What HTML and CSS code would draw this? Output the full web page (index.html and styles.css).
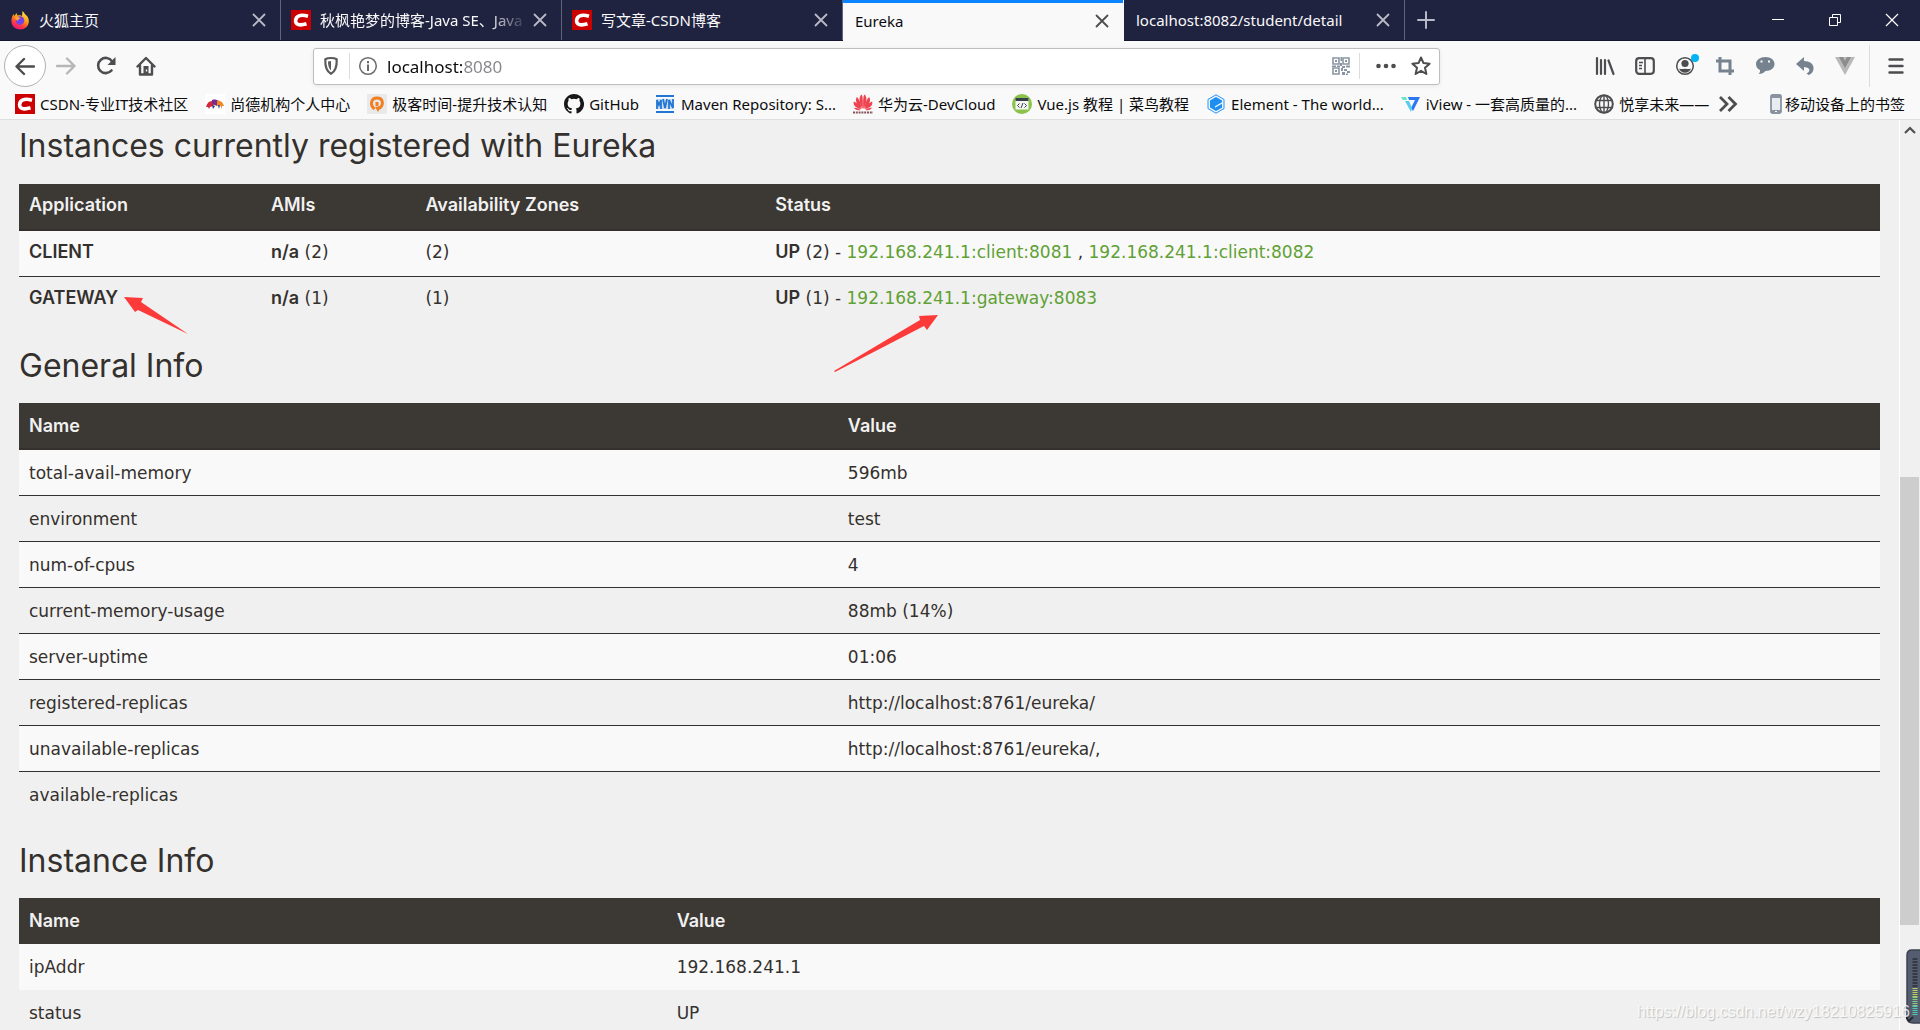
FILE: index.html
```
<!DOCTYPE html>
<html lang="zh-CN">
<head>
<meta charset="utf-8">
<title>Eureka</title>
<link rel="stylesheet" href="styles.css">
</head>
<body>
<svg class="defs" aria-hidden="true">
  <symbol id="csdn" viewBox="0 0 20 20"><path fill="#c00" d="M0 0h20v20H0z"/><path fill="none" stroke="#fff" stroke-width="3.6" d="M17 6.2C9 4 5 6 4.600 10.500 4.300 14.800 8.500 16 15.500 13.800"/></symbol>
  <symbol id="x" viewBox="0 0 20 20"><path fill="none" stroke="currentColor" stroke-width="1.8" stroke-linecap="round" d="M4.500 4.500l11 11M15.500 4.500l-11 11"/></symbol>
</svg>
<header class="browser">
  <div class="tabs">
    <div class="tab">
      <svg class="fav" viewBox="0 0 20 20"><defs><linearGradient id="fx" x1=".8" y1="0" x2=".3" y2="1"><stop offset="0" stop-color="#fff44f"/><stop offset=".45" stop-color="#ff980e"/><stop offset=".75" stop-color="#ff3647"/><stop offset="1" stop-color="#e31587"/></linearGradient></defs><path fill="url(#fx)" d="M12.500 1c2 2 2 3 4.500 5 2.500 3 2.500 8-.5 11-3.500 3.500-9.500 3.300-13-.2C.5 13.500.8 8.500 3.500 4l.8 2L6.500 3l1 2.500c2-.5 3.500-.5 4.500.8z"/><circle cx="10" cy="10.500" r="4.300" fill="#7542e5"/><path fill="#ffa436" d="M5 8c2-1.500 4-1 5.500.5-1.500.2-2.500 1-2.500 2.300C6.500 10.500 5.500 9.500 5 8z"/></svg>
      <span class="tab-label">火狐主页</span><button class="tab-close" aria-label="关闭"><svg><use href="#x"/></svg></button>
    </div>
    <div class="tab">
      <svg class="fav"><use href="#csdn"/></svg>
      <span class="tab-label fade">秋枫艳梦的博客-Java SE、Java</span><button class="tab-close" aria-label="关闭"><svg><use href="#x"/></svg></button>
    </div>
    <div class="tab">
      <svg class="fav"><use href="#csdn"/></svg>
      <span class="tab-label">写文章-CSDN博客</span><button class="tab-close" aria-label="关闭"><svg><use href="#x"/></svg></button>
    </div>
    <div class="tab no-icon active">
      <span class="tab-label">Eureka</span><button class="tab-close" aria-label="关闭"><svg><use href="#x"/></svg></button>
    </div>
    <div class="tab no-icon">
      <span class="tab-label">localhost:8082/student/detail</span><button class="tab-close" aria-label="关闭"><svg><use href="#x"/></svg></button>
    </div>
    <button class="new-tab" aria-label="新标签页"><svg class="ico" viewBox="0 0 20 20"><path fill="none" stroke="#b9bac7" stroke-width="2" stroke-linecap="round" d="M10 2v16M2 10h16"/></svg></button>
    <div class="window-controls">
      <button aria-label="最小化"><svg class="ico" viewBox="0 0 20 20"><path stroke="#fff" d="M4 9.500h12"/></svg></button>
      <button aria-label="还原"><svg class="ico" viewBox="0 0 20 20"><path fill="none" stroke="#fff" d="M4.500 7.500h8v8h-8zM7.500 7.500v-3h8v8h-3"/></svg></button>
      <button aria-label="关闭窗口"><svg class="ico" viewBox="0 0 20 20"><path stroke="#fff" stroke-width="1.200" d="M4 4l12 12M16 4L4 16"/></svg></button>
    </div>
  </div>

  <div class="nav">
    <button class="back" aria-label="后退"><svg class="ico" viewBox="0 0 20 20"><path fill="none" stroke="#4d4d4f" stroke-width="2.400" stroke-linecap="round" stroke-linejoin="round" d="M19 10.500H2M9 3L1.500 10.500 9 18"/></svg></button>
    <button class="tool" aria-label="前进"><svg class="ico" viewBox="0 0 20 20"><path fill="none" stroke="#b7b7b8" stroke-width="2.400" stroke-linecap="round" stroke-linejoin="round" d="M1 10h17M11 2.500l7.500 7.500-7.500 7.500"/></svg></button>
    <button class="tool" aria-label="刷新"><svg class="ico" viewBox="0 0 20 20"><path fill="none" stroke="#4d4d4f" stroke-width="2.600" stroke-linecap="round" d="M15.500 14.500A7.600 7.600 0 1 1 16 5.200"/><path fill="#4d4d4f" d="M19.500 1v8h-8z"/></svg></button>
    <button class="tool" aria-label="主页"><svg class="ico" viewBox="0 0 20 20"><path fill="none" stroke="#4d4d4f" stroke-width="2.400" stroke-linecap="round" stroke-linejoin="round" d="M1.500 10.500L10 2l8.500 8.500M4 9.500v9h12v-9"/><path fill="#4d4d4f" fill-rule="evenodd" d="M7.500 10h5v9h-5zM9.800 13.500v2h1.400v-2z"/></svg></button>
    <div class="urlbar">
      <svg class="ico" viewBox="0 0 20 20"><path fill="none" stroke="#5b5b5d" stroke-width="2.200" stroke-linejoin="round" d="M10 2C7.500 2 5.500 2.500 4.300 3.200c-.3 6.800 1 12 5.700 14.600 4.700-2.600 6-7.800 5.700-14.600C14.500 2.500 12.500 2 10 2z"/><path fill="#5b5b5d" d="M10 5v9.500C7.800 12.500 7 9.500 7 5.500z"/></svg>
      <i class="sep"></i>
      <svg class="ico" viewBox="0 0 20 20"><circle cx="10" cy="10" r="8.300" fill="none" stroke="#6b6b6d" stroke-width="1.500"/><path fill="#6b6b6d" d="M9 8.500h2V15H9zM9 5h2v2.200H9z"/></svg>
      <input class="url" type="text" value="localhost:8080" aria-label="地址">
      <svg class="ico" viewBox="0 0 20 20"><path fill="none" stroke="#8b95a3" stroke-width="1.600" d="M2 2h6v6H2zM12 2h6v6h-6zM2 12h6v6H2z"/><path fill="#8b95a3" d="M4 4h2v2H4zM14 4h2v2h-2zM4 14h2v2H4zM9.500 1h1.500v4H9.500zM9 7h2v3H9zM1 9.500h4V11H1zM6 9.500h3V11H6zM11 10h3v2h-3zM15 9.500h4v2h-4zM10 12h2v3h-2zM13 13h3v2h-3zM16 15h3v2h-3zM11 16h3v3h-3zM15 17.500h2V19h-2z"/></svg>
      <i class="sep"></i>
      <button class="inbar" aria-label="页面操作"><svg class="ico" viewBox="0 0 20 20"><g fill="#4d4d4f"><circle cx="2.500" cy="10" r="2.300"/><circle cx="10" cy="10" r="2.300"/><circle cx="17.500" cy="10" r="2.300"/></g></svg></button>
      <button class="inbar" aria-label="收藏"><svg class="ico" viewBox="0 0 20 20"><path fill="none" stroke="#4d4d4f" stroke-width="2" stroke-linejoin="round" d="M10 1.500l2.500 5.600 6.100.6-4.600 4.100 1.400 6.200L10 14.800 4.600 18 6 11.800 1.400 7.700l6.100-.6z"/></svg></button>
    </div>
    <button class="tool" aria-label="书库"><svg class="ico" viewBox="0 0 20 20"><path fill="none" stroke="#4d4d4f" stroke-width="2.200" stroke-linecap="round" d="M2 2v16M6 4v14M10 4v14M13.500 4.500L18.500 18"/></svg></button>
    <button class="tool" aria-label="侧栏"><svg class="ico" viewBox="0 0 20 20"><rect x="1.200" y="2.200" width="17.600" height="15.600" rx="3" fill="none" stroke="#4d4d4f" stroke-width="2.200"/><path stroke="#4d4d4f" stroke-width="1.600" d="M10 3v14M4 6.500h4M4 9.500h3M4 12.500h3"/></svg></button>
    <button class="tool account" aria-label="账户"><svg class="ico" viewBox="0 0 20 20"><circle cx="10" cy="10" r="8.300" fill="none" stroke="#4d4d4f" stroke-width="1.500"/><circle cx="10" cy="7.500" r="3.600" fill="#4d4d4f"/><path fill="#4d4d4f" d="M4 12.500c2 1.200 3.500.3 6 .3s4 .9 6-.3c-1 2.500-3 4.200-6 4.200s-5-1.700-6-4.200z"/></svg></button>
    <button class="tool" aria-label="截图"><svg class="ico" viewBox="0 0 20 20"><path fill="none" stroke="#77828f" stroke-width="3" d="M1 5h14v14M5 1v14h14"/></svg></button>
    <button class="tool" aria-label="消息"><svg class="ico" viewBox="0 0 20 20"><path fill="#77828f" d="M10.500 1C16 1 19.500 4 19.500 8s-3.500 7-9 7C9 17 6.500 18 3.500 18c1.200-1 1.700-2.200 1.500-4C2.200 12.800 1 10.500 1 8c0-4 4-7 9.500-7z"/><path fill="#f9f9fa" d="M5.500 4.500h2v2h-2zM13 4.500h2v2h-2z"/></svg></button>
    <button class="tool" aria-label="撤销"><svg class="ico" viewBox="0 0 20 20"><path fill="#77828f" d="M9 1v4c7 0 10 4 9.500 8-.3 3-2.500 5.500-5 6l-2-1.800c3.500-.7 5-5.700-2.500-6.200v4L1 8z"/></svg></button>
    <button class="tool" aria-label="Vue"><svg class="ico" viewBox="0 0 20 20"><path fill="#b9b9b9" d="M0 1h20L10 19z"/><path fill="#8c8c8c" d="M4 1h4l2 4 2-4h4l-6 11z"/></svg></button>
    <i class="sep tall"></i>
    <button class="tool" aria-label="菜单"><svg class="ico" viewBox="0 0 20 20"><path stroke="#4d4d4f" stroke-width="2.400" stroke-linecap="round" d="M3.500 3.500h13M3.500 10h13M3.500 16.500h13"/></svg></button>
  </div>

  <nav class="bookmarks">
    <a href="#"><svg class="fav"><use href="#csdn"/></svg>CSDN-专业IT技术社区</a>
    <a href="#"><svg class="fav" viewBox="0 0 20 20"><path fill="#fff" d="M0 0h20v20H0z"/><path fill="#d3273e" d="M1 13c1-4 3-6 6-6l3 1-2 4-3 1-1 2-1-2z"/><path fill="#7d2b8b" d="M7 6c3-1 5 0 7 1l-2 5-5-2z"/><path fill="#f08a1c" d="M12 7c4-1 6 2 7 5l-2 0 0 3-2-4-3 1z"/><path fill="#24377d" d="M7 11l1 4 2-3zM13 11l1 4 1-4z"/></svg>尚德机构个人中心</a>
    <a href="#"><svg class="fav" viewBox="0 0 20 20"><path fill="#e9e9ea" d="M0 0h20v20H0z"/><path fill="none" stroke="#f27e22" stroke-width="3" d="M7.500 15C2.500 11 4 4 10 4c6.500 0 7 7.500 2 10.500M10 8v4"/><path fill="#f27e22" d="M8 13l6-1-3 6z"/></svg>极客时间-提升技术认知</a>
    <a href="#"><svg class="fav" viewBox="0 0 16 16"><path fill="#191717" d="M8 0C3.580 0 0 3.580 0 8c0 3.540 2.290 6.530 5.470 7.590.4.070.55-.17.55-.38 0-.19-.01-.82-.01-1.490-2.010.37-2.530-.49-2.690-.94-.09-.23-.48-.94-.82-1.130-.28-.15-.68-.52-.01-.53.63-.01 1.080.58 1.230.82.72 1.210 1.870.87 2.330.66.07-.52.28-.87.51-1.070-1.780-.2-3.640-.89-3.640-3.950 0-.87.31-1.590.82-2.150-.08-.2-.36-1.020.08-2.120 0 0 .67-.21 2.200.82a7.600 7.600 0 0 1 4 0c1.530-1.040 2.200-.82 2.200-.82.44 1.100.16 1.920.08 2.120.51.560.82 1.270.82 2.150 0 3.070-1.870 3.750-3.650 3.950.29.250.54.730.54 1.480 0 1.070-.01 1.930-.01 2.200 0 .21.150.46.55.38A8 8 0 0 0 8 0z"/></svg>GitHub</a>
    <a href="#"><svg class="fav" viewBox="0 0 20 20"><path fill="#2377d4" d="M0 1h18v2H0zM0 17h18v2H0z"/><path fill="#c9ddf4" d="M0 5h18v10H0z"/><path fill="none" stroke="#2377d4" stroke-width="1.800" d="M1 15V6l2 5 2-5v9M7 5l2 9 2-9M13 15V6l4 8V5"/></svg>Maven Repository: S...</a>
    <a href="#"><svg class="fav" viewBox="0 0 20 20"><g fill="#ef4350"><path d="M9.700 15C6 9 5.500 3 8.500 0.500c1.500 1 1.500 8 1.200 14.500zM10.300 15C14 9 14.500 3 11.500 0.500c-1.500 1-1.500 8-1.200 14.500z"/><path d="M8.800 15C3 10.500 2 6 3.800 3 6 4.500 8 10 8.800 15zM11.200 15C17 10.500 18 6 16.200 3 14 4.500 12 10 11.200 15z"/><path d="M8 15.300C2 13.500 0 11 .8 7.500 4 8.500 7 12 8 15.300zM12 15.300c6-1.800 8-4.300 7.200-7.800C16 8.500 13 12 12 15.300zM7.500 16c-3 .5-5.500 0-6.500-2.200 2.500-.3 5 .7 6.500 2.200zM12.500 16c3 .5 5.500 0 6.500-2.200-2.500-.3-5 .7-6.500 2.200z"/></g><path stroke="#87565c" stroke-width="2" stroke-dasharray="2 .8" d="M0 18.500h20"/></svg>华为云-DevCloud</a>
    <a href="#"><svg class="fav" viewBox="0 0 20 20"><circle cx="10" cy="10" r="10" fill="#8bc34a"/><path fill="#f4f4f2" d="M3.500 4.500h13v11h-13z"/><path fill="#34404c" d="M3.500 4h13v3h-13z"/><path fill="none" stroke="#34404c" d="M7.500 9.500l-2 2 2 2M12.500 9.500l2 2-2 2M11 9l-2 5"/></svg>Vue.js 教程 | 菜鸟教程</a>
    <a href="#"><svg class="fav" viewBox="0 0 20 20"><path fill="#eaf5ff" stroke="#2b94ef" d="M10 .8l8 4.600v9.200l-8 4.600-8-4.600V5.400z"/><path fill="#1d8ff0" d="M10 3l6 3.500v1.700l-7 4v1.500l7-4v4L10 17l-6-3.500v-7z"/></svg>Element - The world...</a>
    <a href="#"><svg class="fav" viewBox="0 0 20 20"><path fill="#62e6c4" d="M0 3h5l1 3H2z"/><path fill="#2d77f5" d="M7 3h12l-7 14-2-3 4-8H8z"/><path fill="#56cdf0" d="M4 7h4l3 7-1 4z"/></svg>iView - 一套高质量的...</a>
    <a href="#"><svg class="fav" viewBox="0 0 20 20"><g fill="none" stroke="#4d4d4f" stroke-width="1.400"><circle cx="10" cy="10" r="8.800" stroke-width="2"/><ellipse cx="10" cy="10" rx="4.500" ry="8.800"/><path d="M2 6.500h16M2 13.500h16M10 1v18"/></g></svg>悦享未来——</a>
    <button class="more" aria-label="更多书签"><svg class="ico" viewBox="0 0 20 20"><path fill="none" stroke="#4d4d4f" stroke-width="2.800" d="M2 3l7 7-7 7M10.500 3l7 7-7 7"/></svg></button>
    <a class="mobile" href="#"><svg class="phone" viewBox="0 0 12 20"><rect x="1" y="1" width="10" height="18" rx="1.500" fill="#e9edf1" stroke="#8993a0" stroke-width="1.800"/><path fill="#8993a0" d="M1 1h10v3H1zM1 16h10v3H1z"/><path fill="#fff" d="M5 17h2v1H5z"/></svg>移动设备上的书签</a>
  </nav>
</header>

<div class="viewport">
  <main class="page">
    <section class="instances">
      <h1>Instances currently registered with Eureka</h1>
      <table>
        <colgroup><col class="c-app"><col class="c-ami"><col class="c-zone"><col></colgroup>
        <thead><tr><th>Application</th><th>AMIs</th><th>Availability Zones</th><th>Status</th></tr></thead>
        <tbody>
          <tr><td><b>CLIENT</b></td><td><b>n/a</b> (2)</td><td>(2)</td><td><b>UP</b> (2) - <a href="#">192.168.241.1:client:8081</a> , <a href="#">192.168.241.1:client:8082</a></td></tr>
          <tr><td><b>GATEWAY</b></td><td><b>n/a</b> (1)</td><td>(1)</td><td><b>UP</b> (1) - <a href="#">192.168.241.1:gateway:8083</a></td></tr>
        </tbody>
      </table>
      <svg class="arrow arrow-app" viewBox="0 0 64 37"><path fill="#fd3a3a" d="M0 0l19 1-2 4 47 32L14 13l-3 2z"/></svg>
      <svg class="arrow arrow-status" viewBox="0 0 104 57"><path fill="#fd3a3a" d="M104 0L93 15l-3-4L1 57l-1-1L86 5l-1-4z"/></svg>
    </section>
    <section>
      <h1>General Info</h1>
      <table class="pairs">
        <colgroup><col class="c-general"><col></colgroup>
        <thead><tr><th>Name</th><th>Value</th></tr></thead>
        <tbody>
          <tr><td>total-avail-memory</td><td>596mb</td></tr>
          <tr><td>environment</td><td>test</td></tr>
          <tr><td>num-of-cpus</td><td>4</td></tr>
          <tr><td>current-memory-usage</td><td>88mb (14%)</td></tr>
          <tr><td>server-uptime</td><td>01:06</td></tr>
          <tr><td>registered-replicas</td><td>http://localhost:8761/eureka/</td></tr>
          <tr><td>unavailable-replicas</td><td>http://localhost:8761/eureka/,</td></tr>
          <tr><td>available-replicas</td><td></td></tr>
        </tbody>
      </table>
    </section>
    <section>
      <h1>Instance Info</h1>
      <table class="pairs plain">
        <colgroup><col class="c-instance"><col></colgroup>
        <thead><tr><th>Name</th><th>Value</th></tr></thead>
        <tbody>
          <tr><td>ipAddr</td><td>192.168.241.1</td></tr>
          <tr><td>status</td><td>UP</td></tr>
        </tbody>
      </table>
    </section>
  </main>
  <div class="scrollbar">
    <svg class="up" viewBox="0 0 20 20"><path fill="none" stroke="#505050" stroke-width="2.200" d="M5 13l5-5 5 5"/></svg>
    <div class="track"><div class="thumb"></div></div>
  </div>
  <svg class="meter" viewBox="0 0 14 75"><path fill="#545d70" stroke="#3b414d" stroke-width="1.500" d="M15 1H6Q1 1 1 6v62q0 6 6 6h8z"/><path stroke="#343943" stroke-width="5" stroke-dasharray="2 1" d="M9 9v30"/><path stroke="#b9cf5e" stroke-width="5" stroke-dasharray="1 1" d="M9 39v9"/><path stroke="#86d07c" stroke-width="5" stroke-dasharray="1 1" d="M9 48v9"/><path stroke="#55c9b0" stroke-width="5" stroke-dasharray="1 1" d="M9 57v9"/><path fill="none" stroke="#272b33" stroke-width="2" d="M0 68l3 4 4-4"/></svg>
  <span class="watermark">https://blog.csdn.net/wzy18210825916</span>
</div>
</body>
</html>
```
FILE: styles.css
```
* { box-sizing: border-box; }

body {
  margin: 0;
  height: 100vh;
  display: flex;
  flex-direction: column;
  overflow: hidden;
  background: #f0f0f0;
  font-family: "Noto Sans", "Noto Sans CJK SC", sans-serif;
  font-size: 15px;
  line-height: 20px;
  color: #0c0c0d;
}

button {
  padding: 0;
  border: 0;
  background: none;
  color: inherit;
  display: flex;
  align-items: center;
  justify-content: center;
}

.defs { position: absolute; width: 0; height: 0; }
.ico, .fav { width: 20px; height: 20px; flex: none; }

/* Tab strip */
.tabs {
  display: flex;
  height: 41px;
  background: #202340;
  border-bottom: 1px solid #15172e;
  color: #f9f9fa;
}
.tab {
  flex: 0 1 281px;
  min-width: 0;
  display: flex;
  align-items: center;
  gap: 9px;
  padding: 0 9px 0 10px;
  border-right: 1px solid #62647a;
}
.tab.no-icon { padding-left: 12px; }
.tab-label {
  flex: 1;
  min-width: 0;
  overflow: hidden;
  white-space: nowrap;
}
.tab-label.fade {
  margin-right: -9px;
  -webkit-mask-image: linear-gradient(90deg, #000 calc(100% - 40px), transparent);
  mask-image: linear-gradient(90deg, #000 calc(100% - 40px), transparent);
}
.tab-close { width: 24px; height: 24px; color: #b9bac7; }
.tab-close svg { width: 20px; height: 20px; }
.tab.active {
  height: 41px;
  background: #f9f9fa;
  color: #0c0c0d;
  border-right-color: #f9f9fa;
  box-shadow: inset 0 3px #0a84ff;
}
.tab.active .tab-close { color: #4d4d4f; }
.new-tab { width: 42px; }
.window-controls { display: flex; margin-left: auto; }
.window-controls button { width: 57px; }

/* Navigation toolbar */
.nav {
  display: flex;
  align-items: center;
  height: 50px;
  padding: 0 4px;
  background: #f9f9fa;
}
.back {
  width: 42px;
  height: 42px;
  border: 1px solid #b1b1b3;
  border-radius: 50%;
  background: #fff;
}
.tool { width: 40px; height: 40px; }
.account { position: relative; }
.account::after {
  content: "";
  position: absolute;
  top: 8px;
  right: 6px;
  width: 8px;
  height: 8px;
  border-radius: 50%;
  background: #00b3f4;
}
.sep { width: 1px; height: 26px; background: #dcdcde; }
.sep.tall { height: 42px; margin: 0 6px 0 4px; }
.urlbar {
  flex: 1;
  display: flex;
  align-items: center;
  gap: 8px;
  height: 37px;
  margin: 0 145px 0 147px;
  padding: 0 8px 0 7px;
  border: 1px solid #bebebf;
  border-radius: 3px;
  background: #fff;
  box-shadow: 0 1px 4px rgba(0, 0, 0, 0.08);
}
.url {
  flex: 1;
  min-width: 0;
  height: 30px;
  padding: 0 0 0 1px;
  border: 0;
  outline: 0;
  font: inherit;
  font-size: 17px;
  color: transparent;
  background: linear-gradient(90deg, #0c0c0d 76px, #86868a 76px);
  -webkit-background-clip: text;
  background-clip: text;
}
.inbar { width: 28px; height: 28px; margin-left: 4px; }
.inbar + .inbar { margin-left: -1px; margin-right: -4px; }

/* Bookmarks toolbar */
.bookmarks {
  display: flex;
  align-items: center;
  gap: 17px;
  height: 29px;
  padding: 0 15px 2px;
  background: #f9f9fa;
  border-bottom: 1px solid #dedede;
}
.bookmarks a {
  display: flex;
  align-items: center;
  gap: 5px;
  color: inherit;
  text-decoration: none;
  white-space: nowrap;
}
.more { margin-left: -8px; }
.bookmarks .mobile { gap: 3px; margin-left: auto; }
.phone { width: 12px; height: 20px; }

/* Page area */
.viewport {
  position: relative;
  flex: 1;
  min-height: 0;
  display: flex;
  overflow: hidden;
}
.page {
  flex: 1;
  min-width: 0;
  height: 100%;
  overflow: hidden;
  padding: 9px 19px 0;
  font-family: "DejaVu Sans", sans-serif;
  font-size: 17px;
  line-height: 24px;
  color: #34302d;
}
section + section { margin-top: 26px; }
h1 {
  margin: 0 0 22px;
  font-family: Inter, sans-serif;
  font-size: 32px;
  font-weight: 400;
  line-height: 33px;
}
section + section h1 { margin-bottom: 21px; }
table {
  width: 100%;
  table-layout: fixed;
  border-collapse: separate;
  border-spacing: 0;
}
th, td {
  height: 46px;
  padding: 9px 10px;
  text-align: left;
  vertical-align: top;
}
.pairs th, .pairs td { padding-top: 11px; }
th, b {
  font-family: Inter, sans-serif;
  font-size: 18px;
  font-weight: 600;
}
th {
  height: 47px;
  background: #3c3833;
  border-bottom: 2px solid #34302d;
  color: #f1f1f1;
}
td { border-bottom: 1px solid #34302d; }
tbody tr:last-child td { border-bottom-color: transparent; }
tbody tr:nth-child(odd) { background: #f9f9f9; }
.plain th { height: 46px; border-bottom-width: 1px; border-color: #3c3833; }
.plain td { border-color: transparent; }
b { line-height: 20px; }
td a { color: #5fa134; text-decoration: none; }
.c-app { width: 13%; }
.c-ami { width: 8.3%; }
.c-zone { width: 18.8%; }
.c-general { width: 44%; }
.c-instance { width: 34.8%; }

/* Annotations over the instance list */
.instances { position: relative; }
.arrow { position: absolute; }
.arrow-app { left: 105px; top: 168px; width: 64px; height: 37px; }
.arrow-status { left: 815px; top: 186px; width: 104px; height: 57px; }

/* Scrollbar */
.scrollbar {
  width: 21px;
  display: flex;
  flex-direction: column;
  border-left: 1px solid #fff;
}
.up { width: 20px; height: 20px; }
.track {
  flex: 1;
  display: flex;
  flex-direction: column;
  padding-right: 1px;
}
.track::before { content: ""; flex: 337; }
.thumb { flex: 448; background: #cdcdcd; }
.track::after { content: ""; flex: 105; }

.meter {
  position: absolute;
  right: 0;
  bottom: 6px;
  width: 14px;
  height: 75px;
}
.watermark {
  position: absolute;
  right: 10px;
  bottom: 8px;
  font-family: "Liberation Sans", sans-serif;
  font-size: 16px;
  color: rgba(255, 255, 255, 0.8);
  text-shadow: 1px 1px 1px rgba(0, 0, 0, 0.2);
}
```
